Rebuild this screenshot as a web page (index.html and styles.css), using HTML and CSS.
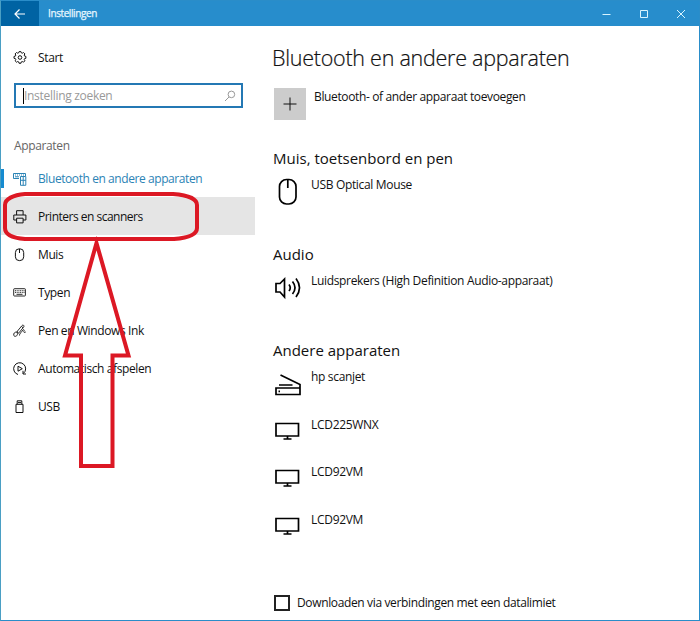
FILE: index.html
```html
<!DOCTYPE html>
<html lang="nl">
<head>
<meta charset="utf-8">
<title>Instellingen</title>
<link rel="stylesheet" href="styles.css">
</head>
<body>
<div class="window">
  <header class="titlebar">
    <div class="back"><svg width="12" height="12" viewBox="0 0 12 12"><path d="M11 6H1.500M5.500 1.500L1 6l4.500 4.500"/></svg></div>
    <span class="caption">Instellingen</span>
    <div class="controls">
      <svg viewBox="0 0 10 10"><path d="M.5 5.500h8"/></svg>
      <svg viewBox="0 0 10 10"><path d="M1.500 1.500h7v7h-7z"/></svg>
      <svg viewBox="0 0 10 10"><path d="M1 1l8 8M9 1L1 9"/></svg>
    </div>
  </header>
  <div class="body">
    <nav class="sidebar">
      <div class="start"><svg class="icon" viewBox="0 0 14 14"><path d="M5.800 1.700L6.100.6h1.800l.3 1.100 1.100.5 1.200-.7 1.400 1.400-.7 1.200.4 1 1.300.3v1.900l-1.300.3-.4 1 .7 1.200-1.400 1.400-1.200-.7-1.100.5-.3 1.300H6.100l-.3-1.300-1.100-.5-1.200.7-1.400-1.400.7-1.200-.4-1L1 7.300V5.400l1.400-.3.4-1-.7-1.200 1.400-1.400 1.200.7z"/><circle cx="7" cy="6.500" r="1.800"/></svg><span>Start</span></div>
      <div class="search"><span class="hint">Instelling zoeken</span><svg width="12" height="12" viewBox="0 0 12 12"><circle cx="7.400" cy="4.400" r="3.300"/><path d="M5 7L1 11"/></svg></div>
      <div class="group">Apparaten</div>
      <ul class="menu">
        <li class="active"><svg class="icon" viewBox="0 0 14 14"><path d="M6 6.500H.5v-5h12V4M2 3h1m1 0h1m1 0h1m1 0h1m1 0h1M2 4.800h4M7.500 4.500h5.300v8.800H7.500zM10.200 4.500v8.800M7.500 8.300h5.300"/></svg><span>Bluetooth en andere apparaten</span></li>
        <li class="hover"><svg class="icon" viewBox="0 0 14 14"><path d="M3.600 5V.7h6.500V5M3.500 10H.8V5h12.100v5h-2.800M3.600 8.200h6.500v4.700H3.600z"/></svg><span class="t-print">Printers en scanners</span></li>
        <li><svg class="icon" viewBox="0 0 14 14"><rect x="2.400" y=".8" width="8.300" height="11.800" rx="3.800"/><path d="M6.500 1v4"/></svg><span>Muis</span></li>
        <li><svg class="icon keyboard" viewBox="0 0 14 14"><rect x=".7" y="2.700" width="11.700" height="7.300" rx=".7"/><path d="M2 4.700h9.500M2 6.400h9.500" stroke-dasharray="1 .7"/><path d="M3.500 8.300h6"/></svg><span>Typen</span></li>
        <li><svg class="icon pen" viewBox="0 0 14 14"><path d="M4.200 8C1.800 7.800.2 9.400.8 11.300c.5 1.800 3 1.200 3.600-.7C4.800 9 3.500 8.600 4.500 7L9 1.600c1-1.200 2.700.1 1.700 1.300L6 8.800c-.5.7-1.800.2-1.200-.8M8.500 2.500l1.600 1.300M6.500 11.500C6 10 9 7.500 10 6c.8-1 1.700.2.900 1.300-.7.900.5 1.700 1.900.6"/></svg><span>Pen en Windows Ink</span></li>
        <li><svg class="icon" viewBox="0 0 14 14"><path d="M5 12.500A6 6 0 1 1 10.300 11.500M10 8.800v3.200h3M5 4.200l4.300 2.500L5 9.200z"/></svg><span>Automatisch afspelen</span></li>
        <li><svg class="icon" viewBox="0 0 14 14"><path d="M4.200 4.300V.8h4.600v3.500M3 4.300h7v8.200H3zM5 2.600h3"/></svg><span>USB</span></li>
      </ul>
    </nav>
    <main class="content">
      <h1>Bluetooth en andere apparaten</h1>
      <div class="add"><div class="plus"><svg width="14" height="14" viewBox="0 0 14 14"><path d="M.5 7h13M7 .5v13"/></svg></div><span>Bluetooth- of ander apparaat toevoegen</span></div>
      <section class="mouse">
        <h2>Muis, toetsenbord en pen</h2>
        <div class="device"><svg viewBox="0 0 30 30"><rect x="6.500" y="3.500" width="16.500" height="24.500" rx="7"/><path d="M14.800 3.500v8.500"/></svg><span>USB Optical Mouse</span></div>
      </section>
      <section>
        <h2>Audio</h2>
        <div class="device"><svg viewBox="0 0 30 30"><path d="M3 11.500H7L11.500 7v18L7 20H3zM16 12.500q2.500 3.300 0 6.600M19.500 9.500q5 6.300 0 12.500M23 6.500q7 9.300 0 18.500"/></svg><span>Luidsprekers (High Definition Audio-apparaat)</span></div>
      </section>
      <section class="other">
        <h2>Andere apparaten</h2>
        <div class="device"><svg viewBox="0 0 30 30"><path d="M3 20h24v6.500H3zM27 20v-3.500L7.500 7M6 17h13.500M5.500 23.300h1.500"/></svg><span>hp scanjet</span></div>
        <div class="device"><svg viewBox="0 0 30 30"><path d="M3 7.500h22.500v12.500H3zM14.500 20v3M10.500 23h8"/></svg><span class="model">LCD225WNX</span></div>
        <div class="device"><svg viewBox="0 0 30 30"><path d="M3 7.500h22.500v12.500H3zM14.500 20v3M10.500 23h8"/></svg><span class="model">LCD92VM</span></div>
        <div class="device"><svg viewBox="0 0 30 30"><path d="M3 7.500h22.500v12.500H3zM14.500 20v3M10.500 23h8"/></svg><span class="model">LCD92VM</span></div>
      </section>
      <div class="check"><i class="box"></i><span>Downloaden via verbindingen met een datalimiet</span></div>
    </main>
  </div>
  <svg class="annotation" width="210" height="300" viewBox="0 180 210 300"><path d="M25 194H173C188 195 197 199 197 205V228C197 235 188 238 174 239H25C12 238 5 234 5 228V205C5 199 13 195 25 194Z"/><path d="M96.500 243L65 355.500H81V466H112.500V355.500H128.500Z"/></svg>
</div>
</body>
</html>
```
FILE: styles.css
```css
* { box-sizing: border-box; }
body { margin: 0; font: 12px/16px "Open Sans", "Noto Sans", sans-serif; letter-spacing: -.36px; color: #111; }
svg { fill: none; stroke: currentColor; flex: none; display: block; }
.window { position: relative; width: 700px; height: 621px; border: 1px solid #2a8dc9; border-left-color: #4a9fc4; background: #fff; overflow: hidden; display: flex; flex-direction: column; }
.titlebar { height: 25px; flex: none; display: flex; align-items: center; background: #278dcc; color: #fff; }
.back { width: 38px; height: 25px; background: #0063a3; display: flex; align-items: center; padding-left: 13px; }
.back svg { stroke-width: 1.2; }
.caption { margin: -2px 0 0 9px; font-size: 10px; letter-spacing: -.4px; color: #e8f7ff; -webkit-text-stroke: .25px; }
.controls { margin-left: auto; display: flex; gap: 27px; padding-right: 13px; color: #d8f4ff; }
.controls svg { width: 10px; height: 10px; }
.body { display: flex; flex: 1; min-height: 0; }
.sidebar { width: 254px; flex: none; padding-top: 24px; }
.icon { width: 14px; height: 14px; stroke-width: 1; }
.keyboard, .pen { stroke-width: .9; }
.start { display: flex; align-items: center; gap: 11px; padding-left: 12px; height: 16px; }
.search { margin: 17px 0 0 13px; width: 229px; height: 25px; border: 2px solid #2478b4; display: flex; align-items: center; justify-content: space-between; padding: 0 5px 0 7px; color: #999; }
.hint { border-left: 1px solid #000; letter-spacing: -.3px; }
.group { margin: 30px 0 0 13px; height: 16px; color: #666; }
.menu { list-style: none; margin: 5px 0 0; padding: 0; }
.menu li { height: 38.15px; display: flex; align-items: center; gap: 11px; padding: 1px 0 0 12px; letter-spacing: -.39px; }
.menu .active { letter-spacing: -.42px; color: #2b83b5; background: linear-gradient(#168bd0, #168bd0) left center / 3px 19px no-repeat; }
.menu .hover { background: #e5e5e5; }
.menu .t-print { letter-spacing: -.5px; }
.content { flex: 1; padding-left: 18px; }
h1, h2 { margin: 0; font-weight: 400; }
h1 { font-size: 21.5px; font-weight: 300; letter-spacing: -.26px; -webkit-text-stroke: .2px; line-height: 30px; margin: 17px 0 0 -1px; white-space: nowrap; }
h2 { font-size: 15px; letter-spacing: 0; line-height: 20px; height: 21px; }
.add { display: flex; gap: 8px; margin-top: 15px; padding-left: 1px; height: 32px; }
.plus { width: 32px; height: 32px; background: #ccc; display: grid; place-items: center; }
.device { display: flex; height: 47.5px; gap: 8px; letter-spacing: -.33px; }
.device svg { width: 30px; height: 30px; stroke-width: 1.7; color: #000; margin-top: 7px; }
.device span { margin-top: 8px; white-space: nowrap; }
.device .model { letter-spacing: -.3px; }
.add span { margin-top: 1px; white-space: nowrap; }
section { height: 96px; }
.mouse { margin-top: 28px; }
.other { height: 255px; }
.check { display: flex; align-items: center; gap: 7px; padding-left: 1px; }
.box { width: 16px; height: 16px; border: 2px solid #222; }
.annotation { position: absolute; left: -1px; top: 179px; color: #dc1824; stroke-width: 4; }
```
